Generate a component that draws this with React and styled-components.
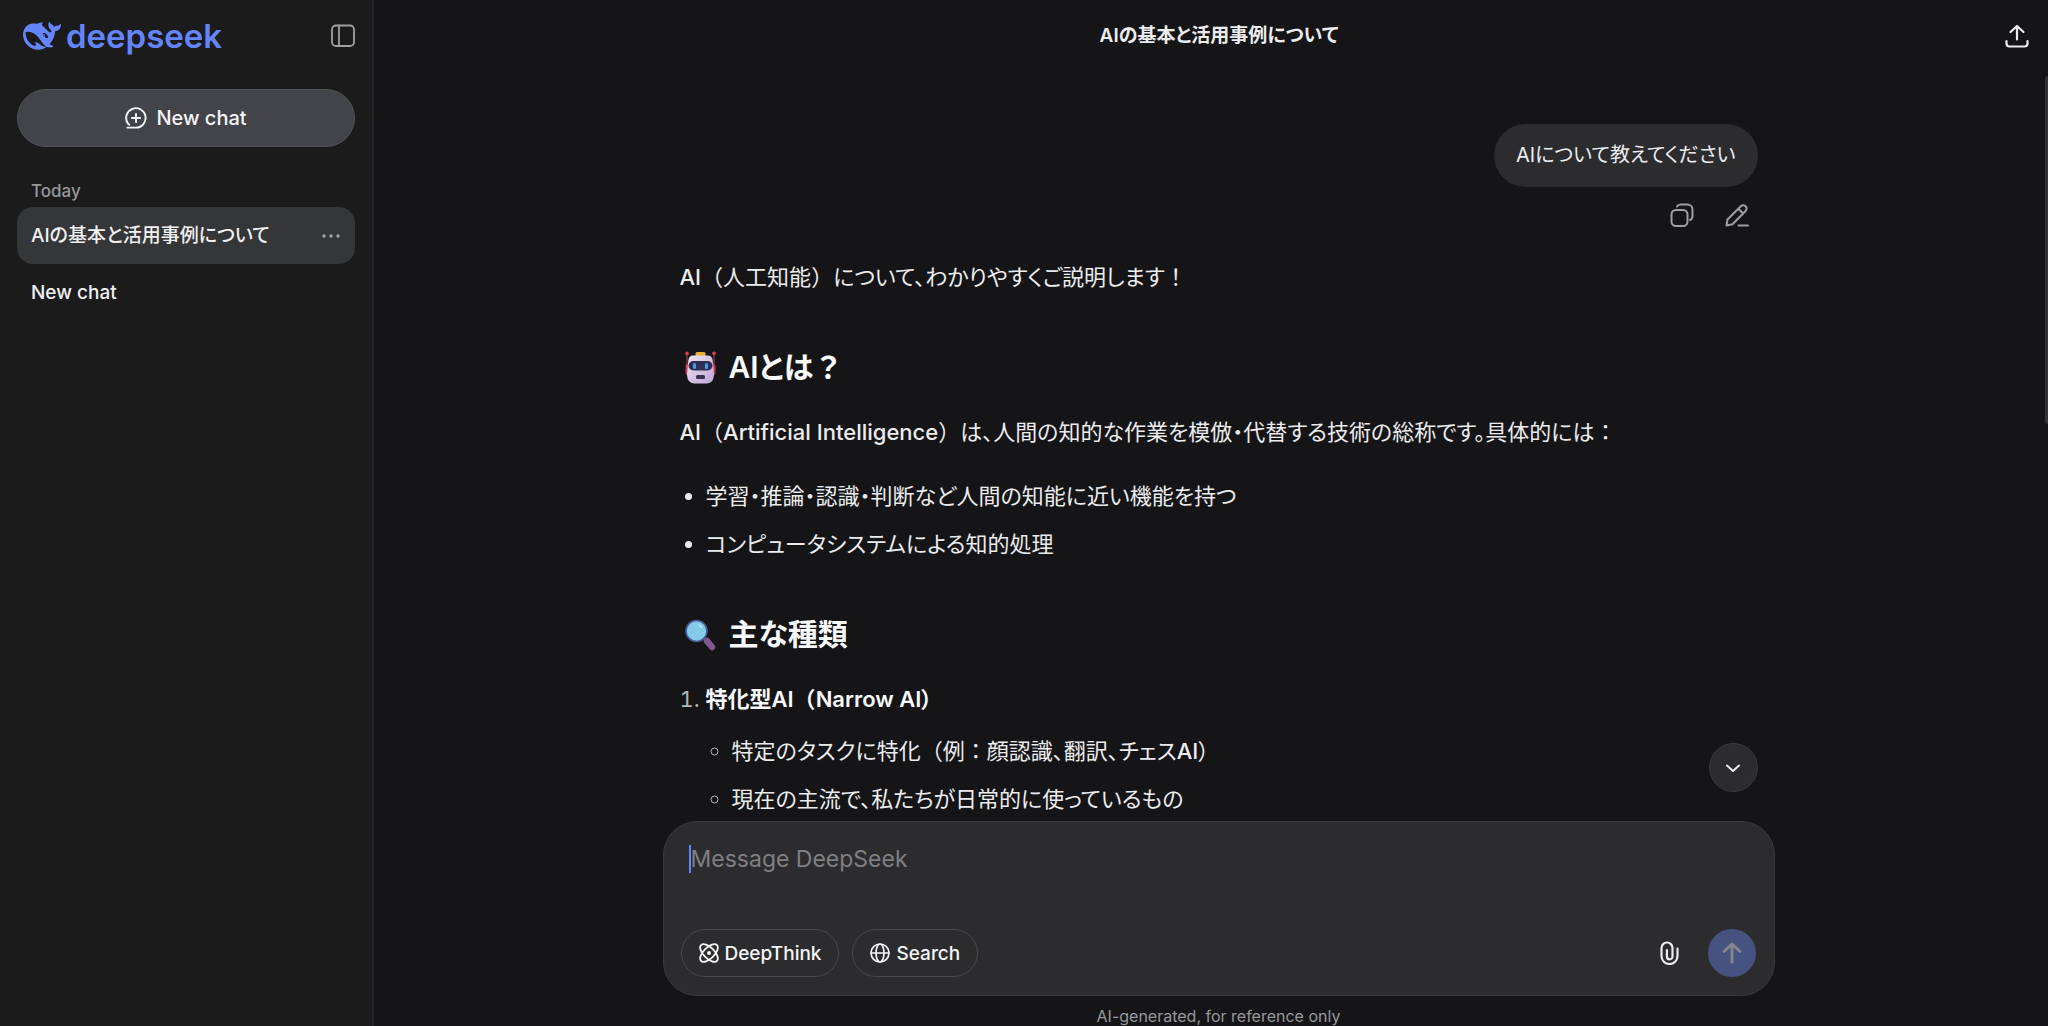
import React, { useState } from "react";
import styled, { createGlobalStyle, css } from "styled-components";

const GlobalStyle = createGlobalStyle`
  * {
    box-sizing: border-box;
  }

  body {
    margin: 0;
    background-color: #151517;
    color: #ececee;
    font-family: Inter, "Noto Sans CJK JP", sans-serif;
    font-size: 20px;
    font-feature-settings: "palt";
  }

  button,
  textarea {
    padding: 0;
    border: none;
    background: none;
    color: inherit;
    font: inherit;
    font-feature-settings: inherit;
  }

  button {
    cursor: pointer;
  }
`;

const Layout = styled.div`
  display: flex;
  height: 100vh;
  overflow: hidden;
`;

const SidebarStyle = styled.aside`
  display: flex;
  flex-direction: column;
  flex: none;
  width: 374px;
  padding: 0 17px;
  border-right: 2px solid #262628;
  background-color: #1b1b1c;

  .top {
    display: flex;
    align-items: center;
    justify-content: space-between;
    height: 71px;
    padding-left: 6px;
  }

  .group {
    margin: 32px 0 4px;
    padding-left: 14px;
    color: #98989b;
    font-size: 17px;
    font-weight: 500;
    line-height: 24px;
  }
`;

const Brand = styled.a`
  display: flex;
  align-items: center;
  gap: 5px;
  color: #6485fa;
  font-size: 33px;
  font-weight: 600;
  line-height: 40px;
  text-decoration: none;
`;

const IconButton = styled.button`
  display: flex;
  align-items: center;
  justify-content: center;
  color: ${({ $bright }) => ($bright ? "#ececee" : "#a0a0a3")};
`;

const NewChatButton = styled.button`
  display: flex;
  align-items: center;
  justify-content: center;
  gap: 9px;
  height: 58px;
  margin-top: 18px;
  border: 1px solid #525358;
  border-radius: 29px;
  background-color: #434449;
  color: #f5f5f6;
  font-size: 20px;
  font-weight: 500;
`;

const HistoryItem = styled.div`
  display: flex;
  align-items: center;
  justify-content: space-between;
  height: 57px;
  padding: 0 14px;
  border-radius: 16px;
  font-size: 19px;
  font-weight: 500;
  line-height: 28px;
  ${({ $active }) =>
    $active &&
    css`
      background-color: #353638;
    `}

  a {
    color: #f0f0f1;
    text-decoration: none;
  }
`;

const MainStyle = styled.main`
  display: flex;
  flex-direction: column;
  flex: 1;
  min-width: 0;
`;

const HeaderStyle = styled.header`
  display: grid;
  grid-template-columns: 1fr auto 1fr;
  align-items: center;
  flex: none;
  height: 71px;
  padding: 0 19px 0 35px;

  h1 {
    grid-column: 2;
    margin: 0;
    font-size: 19px;
    font-weight: 600;
    line-height: 28px;
  }

  button {
    justify-self: end;
  }
`;

const ScrollArea = styled.section`
  position: relative;
  flex: 1;
  min-height: 0;
  padding: 53px 0 0 15px;
  overflow: hidden;
`;

const ScrollThumb = styled.div`
  position: absolute;
  top: 5px;
  right: 0;
  width: 3px;
  height: 348px;
  border-radius: 3px 0 0 3px;
  background-color: #333335;
`;

const Thread = styled.div`
  max-width: 1078px;
  margin: 0 auto;
`;

const UserMessage = styled.div`
  display: flex;
  flex-direction: column;
  align-items: flex-end;

  .bubble {
    padding: 13px 22px;
    border-radius: 32px;
    background-color: #2c2c2e;
    line-height: 37px;
  }

  .actions {
    display: flex;
    gap: 31px;
    height: 32px;
    margin: 12px 9px 28px 0;
  }
`;

const Answer = styled.article`
  font-size: 22px;
  line-height: 37px;

  p {
    margin: 0 0 27px;
  }

  h2 {
    display: flex;
    align-items: center;
    gap: 13px;
    margin: 52px 0 28px;
    padding-left: 5px;
    color: #f9fafb;
    font-size: 30px;
    font-weight: 600;
    line-height: 38px;
  }

  ul,
  ol {
    margin: 0;
    padding-left: 26px;
  }

  li + li {
    margin-top: 11px;
  }

  ol > li::marker {
    color: #b4b4b7;
  }

  li ul {
    margin-top: 15px;
  }

  li ul > li::marker {
    color: #b4b4b7;
  }

  strong {
    color: #f9fafb;
    font-weight: 600;
  }
`;

const FullWidth = styled.span`
  font-feature-settings: normal;
`;

const Latin = styled.span`
  font-weight: 500;
`;

const Dock = styled.div`
  position: relative;
  flex: none;
  padding-left: 15px;

  small {
    display: block;
    margin-top: 10px;
    color: #98989b;
    font-size: 16px;
    line-height: 20px;
    text-align: center;
  }
`;

const Composer = styled.form`
  position: relative;
  display: flex;
  flex-direction: column;
  max-width: 1112px;
  margin: 0 auto;
  padding: 20px 18px 18px 17px;
  border: 1px solid #3a3a3c;
  border-radius: 34px;
  background-color: #2c2c2e;

  .input {
    display: flex;
    padding-left: 8px;
  }

  .toolbar {
    display: flex;
    align-items: center;
    gap: 13px;
  }

  .spacer {
    flex: 1;
  }
`;

const Caret = styled.span`
  width: 2px;
  height: 28px;
  margin-top: 3px;
  background-color: #6485fa;
`;

const MessageInput = styled.textarea`
  flex: 1;
  height: 87px;
  outline: none;
  font-size: 23px;
  line-height: 34px;
  resize: none;

  &::placeholder {
    color: #7f7f82;
    opacity: 1;
  }
`;

const Chip = styled.button`
  display: flex;
  align-items: center;
  gap: 6px;
  height: 48px;
  padding: 0 17px;
  border: 1px solid #48484b;
  border-radius: 24px;
  color: #f5f5f6;
  font-size: 19px;
  font-weight: 500;
`;

const SendButton = styled.button`
  display: flex;
  align-items: center;
  justify-content: center;
  width: 48px;
  height: 48px;
  margin-left: 14px;
  border-radius: 50%;
  background-color: #46527f;
  color: #85868b;
`;

const ScrollDownButton = styled.button`
  position: absolute;
  right: 16px;
  bottom: calc(100% + 30px);
  display: flex;
  align-items: center;
  justify-content: center;
  width: 49px;
  height: 49px;
  border: 1px solid #3a3a3c;
  border-radius: 50%;
  background-color: #2c2c2e;
`;

const Icon = ({ size = 24, width = 2, children }) => (
  <svg
    width={size}
    height={size}
    viewBox="0 0 24 24"
    fill="none"
    stroke="currentColor"
    strokeWidth={width}
    strokeLinecap="round"
    strokeLinejoin="round"
    aria-hidden="true"
  >
    {children}
  </svg>
);

const Whale = () => (
  <svg width="38" height="38" viewBox="0 0 24 24" fill="currentColor" aria-hidden="true">
    <path d="M23.748 4.482c-.254-.124-.364.113-.512.234-.051.039-.094.09-.137.136-.372.397-.806.657-1.373.626-.829-.046-1.537.214-2.163.848-.133-.782-.575-1.248-1.247-1.548-.352-.156-.708-.311-.955-.65-.172-.241-.219-.51-.305-.774-.055-.16-.11-.323-.293-.35-.2-.031-.278.136-.356.276-.313.572-.434 1.202-.422 1.84.027 1.436.633 2.58 1.838 3.393.137.093.172.187.129.323-.082.28-.18.552-.266.833-.055.179-.137.217-.329.14a5.526 5.526 0 01-1.736-1.18c-.857-.828-1.631-1.742-2.597-2.458a11.365 11.365 0 00-.689-.471c-.985-.957.13-1.743.388-1.836.27-.098.093-.432-.779-.428-.872.004-1.67.295-2.687.684a3.055 3.055 0 01-.465.137 9.597 9.597 0 00-2.883-.102c-1.885.21-3.39 1.102-4.497 2.623C.082 8.606-.231 10.684.152 12.85c.403 2.284 1.569 4.175 3.36 5.653 1.858 1.533 3.997 2.284 6.438 2.14 1.482-.085 3.133-.284 4.994-1.86.47.234.962.327 1.78.397.63.059 1.236-.03 1.705-.128.735-.156.684-.837.419-.961-2.155-1.004-1.682-.595-2.113-.926 1.096-1.296 2.746-2.642 3.392-7.003.05-.347.007-.565 0-.845-.004-.17.035-.237.23-.256a4.173 4.173 0 001.545-.475c1.396-.763 1.96-2.015 2.093-3.517.02-.23-.004-.467-.247-.588zM11.581 18c-2.089-1.642-3.102-2.183-3.52-2.16-.392.024-.321.471-.235.763.09.288.207.486.371.739.114.167.192.416-.113.603-.673.416-1.842-.14-1.897-.167-1.361-.802-2.5-1.86-3.301-3.307-.774-1.393-1.224-2.887-1.298-4.482-.02-.386.093-.522.477-.592a4.696 4.696 0 011.529-.039c2.132.312 3.946 1.265 5.468 2.774.868.86 1.525 1.887 2.202 2.891.72 1.066 1.494 2.082 2.48 2.914.348.292.625.514.891.677-.802.09-2.14.11-3.054-.614zm1-6.44a.306.306 0 01.415-.287.302.302 0 01.2.288.306.306 0 01-.31.307.303.303 0 01-.304-.308zm3.11 1.596c-.2.081-.399.151-.59.16a1.245 1.245 0 01-.798-.254c-.274-.23-.47-.358-.552-.758a1.73 1.73 0 01.016-.588c.07-.327-.008-.537-.239-.727-.187-.156-.426-.199-.688-.199a.559.559 0 01-.254-.078c-.11-.054-.2-.172-.114-.338.028-.054.16-.186.192-.21.356-.202.767-.136 1.146.016.352.144.618.408 1.001.782.391.451.462.576.685.914.176.265.336.537.445.848.067.195-.019.354-.25.452z" />
  </svg>
);

const Robot = () => (
  <svg width="31" height="33" viewBox="0 0 31 33" role="img" aria-label="robot">
    <defs>
      <linearGradient id="face" x1="0" y1="0" x2="1" y2="1">
        <stop offset="0" stopColor="#ece6f2" />
        <stop offset="1" stopColor="#bfa5d6" />
      </linearGradient>
    </defs>
    <path d="M2 3v12M29 3v12" stroke="#a8324c" strokeWidth="1.2" />
    <circle cx="2" cy="2.4" r="1.8" fill="#dd3c5c" />
    <circle cx="29" cy="2.4" r="1.8" fill="#dd3c5c" />
    <rect x="0.5" y="13" width="4" height="11" rx="2" fill="#c83a5f" />
    <rect x="26.5" y="13" width="4" height="11" rx="2" fill="#c83a5f" />
    <rect x="10.5" y="1" width="10" height="5" rx="1.5" fill="#e9ae35" />
    <path
      d="M8 4.500h15q4 0 4.700 5L29 24q-.5 8-7 8.500H9Q2.500 32 2 24L3.300 9.500Q4 4.500 8 4.500Z"
      fill="url(#face)"
    />
    <rect x="3.500" y="10" width="24" height="9.500" rx="4.700" fill="#303052" />
    <rect x="8" y="12" width="3" height="6" rx="1.500" fill="#469ce8" />
    <rect x="20" y="12" width="3" height="6" rx="1.500" fill="#469ce8" />
    <rect x="11" y="24" width="9" height="4" rx="1.500" fill="#3a304f" />
  </svg>
);

const Magnifier = () => (
  <svg width="31" height="33" viewBox="0 0 31 33" role="img" aria-label="magnifier">
    <path d="M19 20l4 4" stroke="#5a4a78" strokeWidth="3" />
    <path d="M22 23l5 6" stroke="#7c568c" strokeWidth="6.500" strokeLinecap="round" />
    <circle cx="11.500" cy="13" r="10.500" fill="#82c9ea" stroke="#4b5a91" strokeWidth="1.600" />
    <path d="M13 6q4 1 4.500 4q-3 0-4.500-4Z" fill="#c0e6fa" />
  </svg>
);

const history = ["AIの基本と活用事例について", "New chat"];

function Sidebar() {
  return (
    <SidebarStyle>
      <div className="top">
        <Brand href="#">
          <Whale />
          deepseek
        </Brand>
        <IconButton aria-label="Collapse sidebar">
          <Icon size={24} width={1.8}>
            <rect x="1" y="1.500" width="22" height="20.500" rx="4" />
            <path d="M8 1.500v20.500" />
          </Icon>
        </IconButton>
      </div>
      <NewChatButton>
        <Icon size={22} width={2.100}>
          <path d="M2.700 22.500h9.300A10.600 10.600 0 1 0 2.700 17.200q.7 1.300 2 2.200" />
          <path d="M12 7.500v9M7.500 12h9" />
        </Icon>
        New chat
      </NewChatButton>
      <div className="group">Today</div>
      {history.map((name, i) => (
        <HistoryItem key={name} $active={i === 0}>
          <a href="#">{name}</a>
          {i === 0 && (
            <IconButton aria-label="More">
              <svg width="20" height="20" viewBox="0 0 20 20" fill="currentColor">
                <circle cx="3" cy="10" r="1.700" />
                <circle cx="10" cy="10" r="1.700" />
                <circle cx="17" cy="10" r="1.700" />
              </svg>
            </IconButton>
          )}
        </HistoryItem>
      ))}
    </SidebarStyle>
  );
}

function Conversation() {
  return (
    <ScrollArea>
      <Thread>
        <UserMessage>
          <div className="bubble">AIについて教えてください</div>
          <div className="actions">
            <IconButton aria-label="Copy">
              <Icon size={24} width={2}>
                <rect x="1.500" y="7" width="16" height="16" rx="4.500" />
                <path d="M7 3.500Q8 1.500 11 1.500h6.500a5 5 0 0 1 5 5V13q0 3-2.500 4" />
              </Icon>
            </IconButton>
            <IconButton aria-label="Edit">
              <Icon size={24} width={2}>
                <path d="M1.500 22.500l1-6L15.800 3.200a3.300 3.300 0 0 1 4.800 4.800L7.500 21.300zM13.300 5.700l4.800 4.800M13.500 22.500h9.500" />
              </Icon>
            </IconButton>
          </div>
        </UserMessage>
        <Answer>
          <p>
            <Latin>AI</Latin>
            <FullWidth>（</FullWidth>人工知能<FullWidth>）</FullWidth>について、わかりやすくご説明します<FullWidth>！</FullWidth>
          </p>
          <h2>
            <Robot />
            <span>
              AIとは<FullWidth>？</FullWidth>
            </span>
          </h2>
          <p>
            <Latin>AI</Latin>
            <FullWidth>（</FullWidth>
            <Latin>Artificial Intelligence</Latin>
            <FullWidth>）</FullWidth>は、人間の知的な作業を模倣・代替する技術の総称です。具体的には<FullWidth>：</FullWidth>
          </p>
          <ul>
            <li>学習・推論・認識・判断など人間の知能に近い機能を持つ</li>
            <li>コンピュータシステムによる知的処理</li>
          </ul>
          <h2>
            <Magnifier />
            <span>主な種類</span>
          </h2>
          <ol>
            <li>
              <strong>
                特化型AI<FullWidth>（</FullWidth>Narrow AI）
              </strong>
              <ul>
                <li>
                  特定のタスクに特化<FullWidth>（</FullWidth>例<FullWidth>：</FullWidth>顔認識、翻訳、チェス<Latin>AI</Latin>）
                </li>
                <li>現在の主流で、私たちが日常的に使っているもの</li>
              </ul>
            </li>
          </ol>
        </Answer>
      </Thread>
      <ScrollThumb />
    </ScrollArea>
  );
}

function MessageBox() {
  const [message, setMessage] = useState("");

  return (
    <Dock>
      <Composer onSubmit={(e) => e.preventDefault()}>
        <ScrollDownButton type="button" aria-label="Scroll to bottom">
          <Icon size={24}>
            <path d="M6 9.500l6 5.500 6-5.500" />
          </Icon>
        </ScrollDownButton>
        <div className="input">
          <Caret />
          <MessageInput
            aria-label="Message DeepSeek"
            placeholder="Message DeepSeek"
            value={message}
            onChange={(e) => setMessage(e.target.value)}
          />
        </div>
        <div className="toolbar">
          <Chip type="button">
            <Icon size={20} width={2.200}>
              <ellipse cx="12" cy="12" rx="13.500" ry="6.500" transform="rotate(45 12 12)" />
              <ellipse cx="12" cy="12" rx="13.500" ry="6.500" transform="rotate(-45 12 12)" />
              <circle cx="12" cy="12" r="1.300" fill="currentColor" />
            </Icon>
            DeepThink
          </Chip>
          <Chip type="button">
            <Icon size={20} width={2}>
              <circle cx="12" cy="12" r="10.800" />
              <ellipse cx="12" cy="12" rx="4.800" ry="10.800" />
              <path d="M1.200 12h21.600" />
            </Icon>
            Search
          </Chip>
          <div className="spacer" />
          <IconButton type="button" aria-label="Attach file" $bright>
            <Icon size={24} width={2.200}>
              <path d="M15.500 7v8.500a2.800 2.800 0 0 1-5.600 0V9M20.500 7.500v7.500a8 8 0 0 1-16 0V7a5.500 5.500 0 0 1 11 0" />
            </Icon>
          </IconButton>
          <SendButton aria-label="Send">
            <Icon size={24} width={3}>
              <path d="M12 21V3M4 10.500L12 3l8 7.500" />
            </Icon>
          </SendButton>
        </div>
      </Composer>
      <small>AI-generated, for reference only</small>
    </Dock>
  );
}

export default function App() {
  return (
    <>
      <GlobalStyle />
      <Layout>
        <Sidebar />
        <MainStyle>
          <HeaderStyle>
            <h1>AIの基本と活用事例について</h1>
            <IconButton aria-label="Share" $bright>
              <Icon size={24} width={2.200}>
                <path d="M12 15.500V2M5.500 8L12 2l6.500 6M1.500 17v2.500q0 3 3 3h15q3 0 3-3V17" />
              </Icon>
            </IconButton>
          </HeaderStyle>
          <Conversation />
          <MessageBox />
        </MainStyle>
      </Layout>
    </>
  );
}
